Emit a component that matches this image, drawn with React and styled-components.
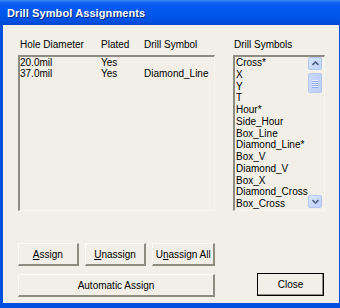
import React from 'react';
import styled, { createGlobalStyle } from 'styled-components';

const GlobalStyle = createGlobalStyle`
  html, body {
    margin: 0;
    padding: 0;
    background: #0055e5;
  }

  body {
    font-family: "Liberation Sans", Arial, sans-serif;
    font-size: 10px;
    color: #000;
  }
`;

const Window = styled.div`
  width: 340px;
  height: 308px;
  box-sizing: border-box;
  display: flex;
  flex-direction: column;
  background: #0050de;
  padding: 0 1px 5px 3px;
`;

const TitleBar = styled.div`
  flex: none;
  height: 25px;
  margin: 0 -1px 0 -3px;
  padding-left: 7px;
  display: flex;
  align-items: center;
  background: linear-gradient(to bottom, #3d8bf5 0px, #0c5df0 3px, #0058ee 12px, #0053e3 20px, #0047cf 25px);
  color: #fff;
  font-weight: bold;
  font-size: 11px;
  text-shadow: 1px 1px 0 #0a2a8a;
  letter-spacing: 0.1px;
`;

const Client = styled.div`
  flex: 1;
  background: #f1efe7;
  padding: 13px 13px 0 15px;
  display: flex;
  flex-direction: column;
`;

const Columns = styled.div`
  display: grid;
  grid-template-columns: 197px 92px;
  column-gap: 18px;
  align-items: start;
`;

const ColumnHeader = styled.div`
  height: 17px;
  line-height: 14px;
  padding-left: ${p => p.$pad || 0}px;
  display: ${p => (p.$grid ? 'grid' : 'block')};
  grid-template-columns: 81px 43px 1fr;
`;

const ListBox = styled.div`
  height: 156px;
  box-sizing: border-box;
  border-style: solid;
  border-width: 2px 1px 1px 2px;
  border-color: #8e8b80 #f6f5ef #f6f5ef #8e8b80;
  display: flex;
`;

const Rows = styled.div`
  flex: 1;
  padding-left: ${p => p.$pad || 0}px;
`;

const Row = styled.div`
  display: grid;
  grid-template-columns: 81px 43px 1fr;
  line-height: 11px;
  white-space: nowrap;
`;

const Item = styled.div`
  line-height: 11.75px;
  white-space: nowrap;
`;

const ScrollBar = styled.div`
  width: 14px;
  margin-right: 2px;
  display: flex;
  flex-direction: column;
  padding-bottom: 2px;
`;

const ScrollButton = styled.div`
  height: 13px;
  box-sizing: border-box;
  border: 1px solid #b3c8f3;
  border-radius: 2px;
  background: linear-gradient(to bottom right, #d8e4fd, #bcd0fa);
  display: flex;
  align-items: center;
  justify-content: center;
`;

const Thumb = styled.div`
  height: 20px;
  margin-top: 3px;
  box-sizing: border-box;
  border: 1px solid #b3c8f3;
  border-radius: 2px;
  background: linear-gradient(to right, #c9d8fc, #bdd0fa);
  display: flex;
  flex-direction: column;
  align-items: center;
  justify-content: center;
  gap: 1px;
`;

const Grip = styled.div`
  width: 6px;
  height: 1px;
  background: #eef3fe;
  box-shadow: 0 1px 0 #8aa6e6;
`;

const Track = styled.div`
  flex: 1;
`;

const Bottom = styled.div`
  margin-top: 32px;
  display: grid;
  grid-template-columns: 197px 92px;
  column-gap: 18px;
`;

const ButtonStack = styled.div`
  display: flex;
  flex-direction: column;
  gap: 8px;
`;

const ButtonRow = styled.div`
  display: flex;
  gap: 6px;
`;

const Button = styled.button`
  height: 23px;
  width: ${p => (p.$w ? `${p.$w}px` : '100%')};
  box-sizing: border-box;
  padding: 0;
  margin: 0;
  background: #f1efe7;
  font-family: "Liberation Sans", Arial, sans-serif;
  font-size: 10px;
  color: #000;
  border-style: solid;
  border-width: 1px 2px 2px 1px;
  border-color: #fbfaf6 #8e8b80 #8e8b80 #fbfaf6;
  ${p => p.$default && `
    border: 1px solid #000;
    box-shadow: inset -1px -1px 0 #8e8b80;
  `}
`;

const CloseSlot = styled.div`
  display: flex;
  justify-content: flex-end;
  padding: 30px 1px 0 0;
`;

const Arrow = ({ down }) => (
  <svg width="7" height="5" viewBox="0 0 7 5">
    <polyline
      points={down ? '0.5,1 3.5,4 6.5,1' : '0.5,4 3.5,1 6.5,4'}
      fill="none"
      stroke="#4d6185"
      strokeWidth="1.6"
    />
  </svg>
);

const holes = [
  { size: '20.0mil', plated: 'Yes', symbol: '' },
  { size: '37.0mil', plated: 'Yes', symbol: 'Diamond_Line' },
];

const symbols = [
  'Cross*', 'X', 'Y', 'T', 'Hour*', 'Side_Hour', 'Box_Line', 'Diamond_Line*',
  'Box_V', 'Diamond_V', 'Box_X', 'Diamond_Cross', 'Box_Cross',
];

const App = () => {
  return (
    <>
      <GlobalStyle />
      <Window>
        <TitleBar>Drill Symbol Assignments</TitleBar>
        <Client>
          <Columns>
            <div>
              <ColumnHeader $grid $pad={2}>
                <span>Hole Diameter</span>
                <span>Plated</span>
                <span>Drill Symbol</span>
              </ColumnHeader>
              <ListBox>
                <Rows>
                  {holes.map(h => (
                    <Row key={h.size}>
                      <span>{h.size}</span>
                      <span>{h.plated}</span>
                      <span>{h.symbol}</span>
                    </Row>
                  ))}
                </Rows>
              </ListBox>
            </div>
            <div>
              <ColumnHeader $pad={1}>Drill Symbols</ColumnHeader>
              <ListBox>
                <Rows $pad={1}>
                  {symbols.map(s => <Item key={s}>{s}</Item>)}
                </Rows>
                <ScrollBar>
                  <ScrollButton><Arrow /></ScrollButton>
                  <Thumb><Grip /><Grip /><Grip /><Grip /></Thumb>
                  <Track />
                  <ScrollButton><Arrow down /></ScrollButton>
                </ScrollBar>
              </ListBox>
            </div>
          </Columns>
          <Bottom>
            <ButtonStack>
              <ButtonRow>
                <Button $w={61}><u>A</u>ssign</Button>
                <Button $w={62}><u>U</u>nassign</Button>
                <Button $w={63}>U<u>n</u>assign All</Button>
              </ButtonRow>
              <Button>Automatic Assign</Button>
            </ButtonStack>
            <CloseSlot>
              <Button $w={67} $default>Close</Button>
            </CloseSlot>
          </Bottom>
        </Client>
      </Window>
    </>
  );
};

export default App;
